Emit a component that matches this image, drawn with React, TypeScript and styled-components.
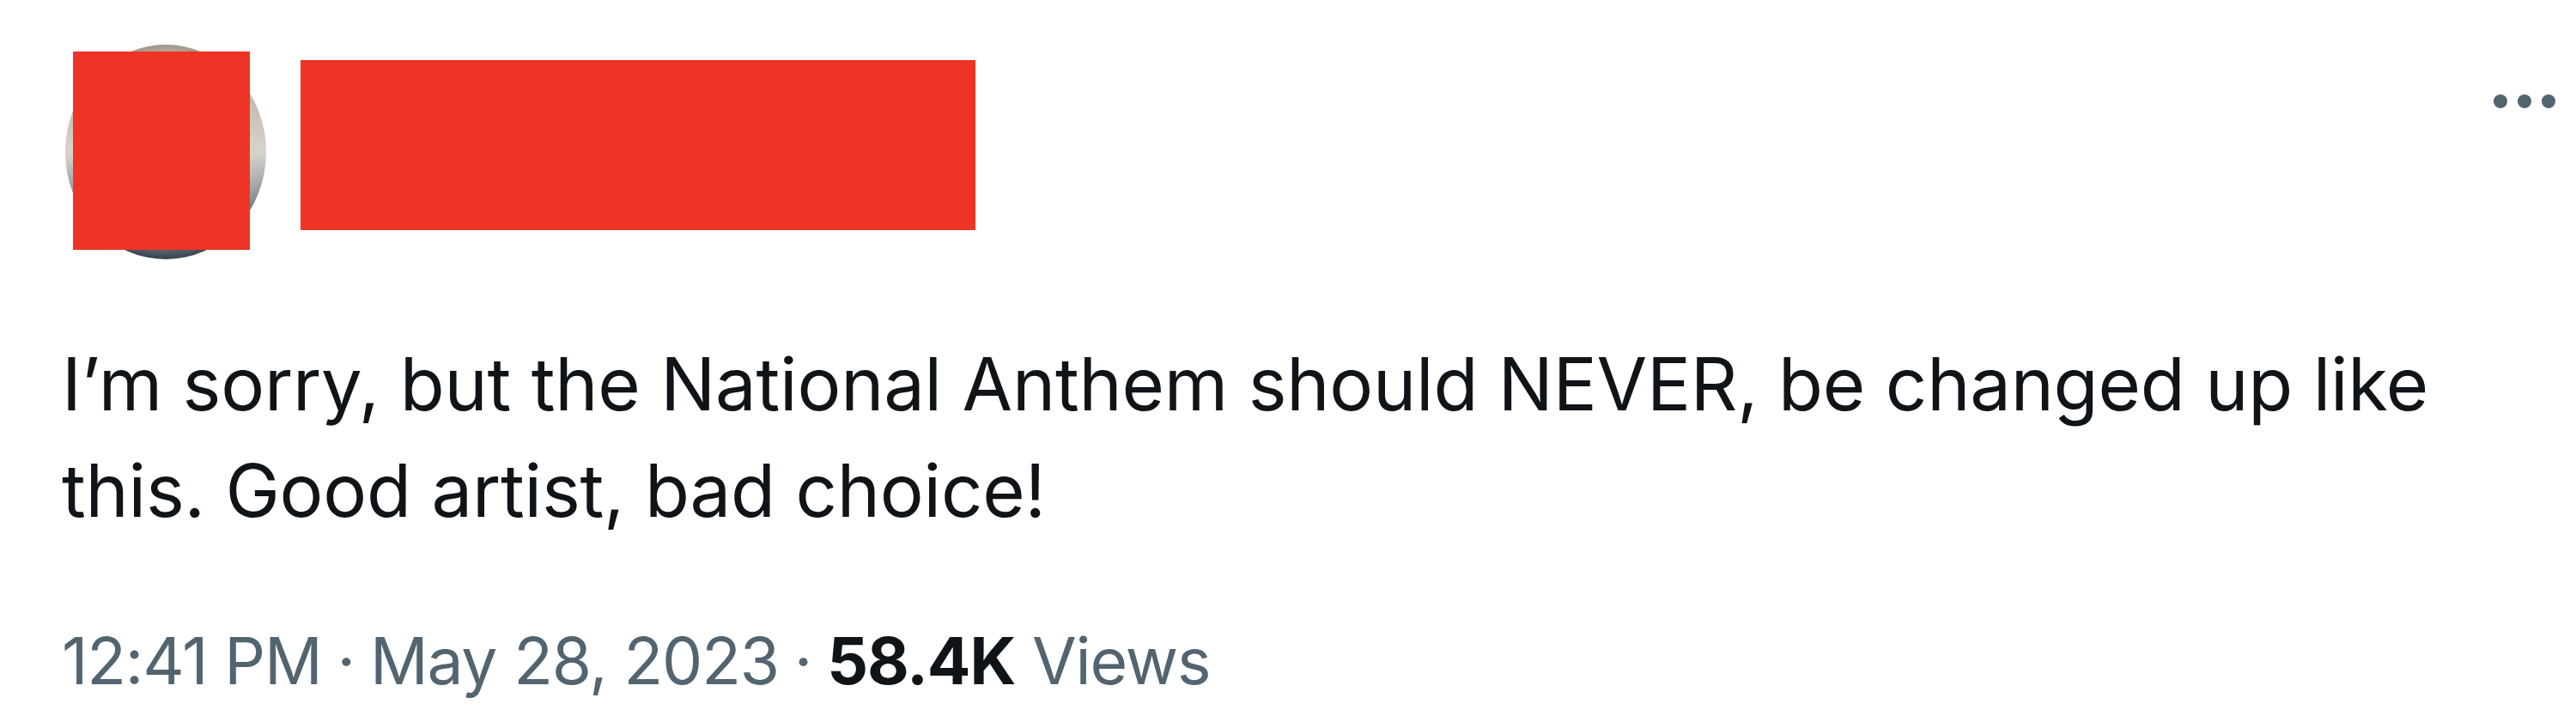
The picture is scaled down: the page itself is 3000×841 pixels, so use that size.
import React from "react"
import styled, { createGlobalStyle } from "styled-components"

// ______________________________________________________
// page
const Global = createGlobalStyle`
  html, body {
    margin: 0;
    padding: 0;
    background: #ffffff;
  }
  body {
    font-family: Inter, "Noto Sans", "Liberation Sans", sans-serif;
    color: #0f1419;
  }
`

const Tweet = styled.article`
  width: 3000px;
  height: 841px;
  box-sizing: border-box;
  padding: 52px 24px 0 72px;
  display: flex;
  flex-direction: column;
  overflow: hidden;
`

// ______________________________________________________
// header
const Header = styled.header`
  display: flex;
  align-items: flex-start;
`

const Avatar = styled.div`
  position: relative;
  flex: 0 0 234px;
  width: 234px;
  height: 250px;
  margin-left: 4px;
  border-radius: 50%;
  background:
    radial-gradient(ellipse at 50% 45%, rgba(236, 230, 218, 0.95) 0%, rgba(214, 204, 188, 0.8) 45%, rgba(214, 204, 188, 0) 72%),
    linear-gradient(180deg, #7b6f66 0%, #b9b0a4 22%, #d9d6d0 50%, #6d7884 78%, #2e3c4b 100%);
`

const Redaction = styled.div`
  background: #ee3424;
`

const AvatarRedaction = styled(Redaction)`
  position: absolute;
  left: 9px;
  top: 8px;
  width: 206px;
  height: 231px;
`

const NameRedaction = styled(Redaction)`
  width: 786px;
  height: 198px;
  margin: 18px 0 0 40px;
`

const More = styled.div`
  margin-left: auto;
  margin-top: 58px;
  display: flex;
  gap: 12px;
`

const Dot = styled.span`
  width: 16px;
  height: 16px;
  border-radius: 50%;
  background: #536471;
`

// ______________________________________________________
// body
const Text = styled.p`
  margin: 84px 0 0;
  width: 2830px;
  font-size: 85px;
  line-height: 124px;
  font-weight: 400;
  letter-spacing: -0.25px;
  color: #0f1419;
`

const Meta = styled.div`
  margin-top: 86px;
  font-size: 75px;
  line-height: 100px;
  letter-spacing: -1.2px;
  color: #536471;
  white-space: nowrap;
`

const Sep = styled.span`
  padding: 0 18px;
`

const Count = styled.span`
  font-weight: 700;
  color: #0f1419;
`

export default function App() {
  return (
    <>
      <Global />
      <Tweet>
        <Header>
          <Avatar>
            <AvatarRedaction />
          </Avatar>
          <NameRedaction />
          <More>
            <Dot />
            <Dot />
            <Dot />
          </More>
        </Header>
        <Text>
          I’m sorry, but the National Anthem should NEVER, be changed up like
          this. Good artist, bad choice!
        </Text>
        <Meta>
          12:41 PM<Sep>·</Sep>May 28, 2023<Sep>·</Sep>
          <Count>58.4K</Count> Views
        </Meta>
      </Tweet>
    </>
  )
}
